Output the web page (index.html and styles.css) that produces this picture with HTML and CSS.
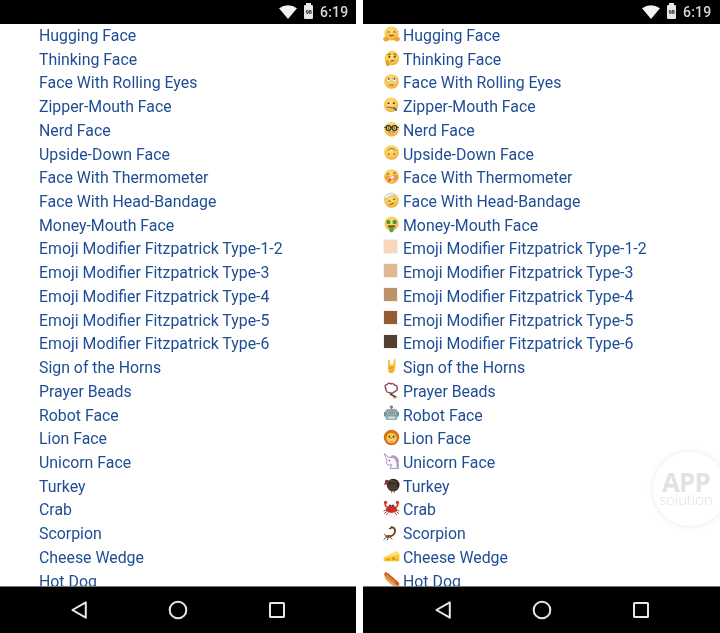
FILE: index.html
```html
<!DOCTYPE html>
<html lang="en">
<head>
<meta charset="utf-8">
<title>Emoji list comparison</title>
<link rel="stylesheet" href="styles.css">
</head>
<body>
<svg class="defs" aria-hidden="true">
  <defs>
    <radialGradient id="fc" cx=".45" cy=".35" r=".7"><stop offset="0" stop-color="#fde27e"/><stop offset=".7" stop-color="#f8c44c"/><stop offset="1" stop-color="#e99a28"/></radialGradient>
    <symbol id="e-hug" viewBox="0 0 16 16"><circle cx="8" cy="7" r="6.6" fill="url(#fc)"/><path d="M4.2 6q1.2-1.4 2.4 0M9.4 6q1.2-1.4 2.4 0" fill="none" stroke="#7a4a1c" stroke-width=".9"/><path d="M4.8 8.3q3.2 3.4 6.4 0z" fill="#b5541f"/><ellipse cx="2.9" cy="12.3" rx="2.7" ry="2.2" fill="#f2a22e"/><ellipse cx="13.1" cy="12.3" rx="2.7" ry="2.2" fill="#f2a22e"/></symbol>
    <symbol id="e-think" viewBox="0 0 16 16"><circle cx="8.4" cy="7.6" r="6.8" fill="url(#fc)"/><path d="M4.5 4.6l3-1M9.6 3.4l3 1.4" stroke="#6b3d16" stroke-width=".9"/><circle cx="6" cy="6.4" r=".9" fill="#4a2a10"/><circle cx="11" cy="6.4" r=".9" fill="#4a2a10"/><path d="M7 10.6l3.6-.8" stroke="#8a4a1a" stroke-width="1"/><path d="M2.6 9.2q2.6.6 3.4 2.4l-.2 3.4h-2.4q-1.6-2.6-.8-5.8z" fill="#ee9d2c"/></symbol>
    <symbol id="e-roll" viewBox="0 0 16 16"><circle cx="8" cy="8" r="6.9" fill="url(#fc)"/><circle cx="5.3" cy="6.6" r="2.2" fill="#f7f3e6" stroke="#b98a3c" stroke-width=".4"/><circle cx="10.7" cy="6.6" r="2.2" fill="#f7f3e6" stroke="#b98a3c" stroke-width=".4"/><circle cx="5.3" cy="5.5" r=".9" fill="#5d4a30"/><circle cx="10.7" cy="5.5" r=".9" fill="#5d4a30"/><path d="M6 11.3h4" stroke="#8a5a20" stroke-width=".9"/></symbol>
    <symbol id="e-zip" viewBox="0 0 16 16"><circle cx="7.6" cy="7.4" r="6.9" fill="url(#fc)"/><circle cx="5.2" cy="5.8" r=".9" fill="#4a2a10"/><circle cx="10.2" cy="5.8" r=".9" fill="#4a2a10"/><path d="M3.8 9.6l6.6.6" stroke="#55606a" stroke-width="1.3" stroke-dasharray=".9 .4"/><path d="M10 10l3 2.8" stroke="#4d5a60" stroke-width="1.6"/></symbol>
    <symbol id="e-nerd" viewBox="0 0 16 16"><circle cx="8" cy="7.8" r="6.8" fill="url(#fc)"/><path d="M1.3 6h13.4" stroke="#2b2417" stroke-width="1"/><circle cx="5.2" cy="6.6" r="2.3" fill="#f8e3a0" stroke="#2b2417" stroke-width="1.1"/><circle cx="10.8" cy="6.6" r="2.3" fill="#f8e3a0" stroke="#2b2417" stroke-width="1.1"/><circle cx="5.2" cy="6.6" r=".8" fill="#2b2417"/><circle cx="10.8" cy="6.6" r=".8" fill="#2b2417"/><path d="M5 10.3q3 2.8 6 0z" fill="#fff" stroke="#7a4a1c" stroke-width=".5"/></symbol>
    <symbol id="e-up" viewBox="0 0 16 16"><circle cx="8" cy="8" r="6.9" fill="url(#fc)"/><path d="M4.4 6.2q3.6-4 7.2 0" fill="none" stroke="#8a5a20" stroke-width=".9"/><path d="M5.4 8.6v1.6M10.6 8.6v1.6" stroke="#6a4418" stroke-width="1.1"/></symbol>
    <symbol id="e-thermo" viewBox="0 0 16 16"><circle cx="8" cy="8" r="6.9" fill="url(#fc)"/><ellipse cx="11" cy="9" rx="3" ry="2.6" fill="#ee7a42" opacity=".7"/><ellipse cx="4.2" cy="9" rx="2.4" ry="2.2" fill="#ee7a42" opacity=".6"/><path d="M3.6 5.8q1.2-1 2.4 0M9.6 5q1.2-1 2.4 0" fill="none" stroke="#6a3a14" stroke-width=".9"/><path d="M5.2 12.4l4.8-4.6" stroke="#f2f2f2" stroke-width="2"/><path d="M5 12.6l2.6-2.4" stroke="#d8302c" stroke-width="1.6"/></symbol>
    <symbol id="e-band" viewBox="0 0 16 16"><circle cx="8" cy="8" r="6.9" fill="url(#fc)"/><path d="M1.1 7.4q-.2-3 2.2-4.8q3-2.2 7-1.2l1.4 1.6q-6 .2-10.6 4.4z" fill="#f2f2ee" stroke="#a9a9a0" stroke-width=".5"/><path d="M5 8.8q1-.8 2 0M9.4 7q1-.8 2 0" fill="none" stroke="#5e3a14" stroke-width=".9"/><path d="M6 12l4.4-1.6" stroke="#8a4a1a" stroke-width=".9"/></symbol>
    <symbol id="e-money" viewBox="0 0 16 16"><circle cx="8" cy="7" r="6.6" fill="url(#fc)"/><rect x="3.4" y="4" width="3.4" height="3.4" fill="#3d9636"/><rect x="9.2" y="4" width="3.4" height="3.4" fill="#3d9636"/><path d="M4.4 9h7.2q-.4 1.3-1.4 1.7H5.8q-1-.4-1.4-1.7z" fill="#5a3210"/><path d="M6 10.2h4v3.3a2 2 0 0 1-4 0z" fill="#4aad3c"/></symbol>
    <symbol id="e-horns" viewBox="0 0 16 16"><path d="M4.6 1.6l1.5-.2.9 5h2.4l1-5.2 1.5.3-.3 7.5q0 3.6-2.6 5.4h-2.3q-2.4-1.4-2-5z" fill="#f6c23e"/><path d="M5.5 8.3h4.6v1.6q-2.4 1.3-4.6.4z" fill="#e39a28"/><path d="M6 12.3q2 .8 3.800-.6" fill="none" stroke="#c87f20" stroke-width=".7"/></symbol>
    <symbol id="e-beads" viewBox="0 0 16 16"><path d="M2.6 6q-1.800-3 1.400-3.800q1.600-2 3.400-.4q2.600-1 3.600 1.200q2.800.2 2.200 2.800q1 2.200-1.600 2.800l-3 2.200-3.200-1q-2.400 0-2.800-3.800z" fill="none" stroke="#7b2c48" stroke-width="1.300" stroke-dasharray="1.800 .2"/><path d="M6.600 11.400l5.600 2.800" stroke="#4a3323" stroke-width="1.500"/><path d="M9.400 14.800l3.800-.2" stroke="#c9a06a" stroke-width="1.300"/></symbol>
    <symbol id="e-robot" viewBox="0 0 16 16"><circle cx="8" cy="1.800" r="1.500" fill="#c3684a"/><path d="M7.400 3h1.200v1.600H7.400z" fill="#666"/><rect x="1" y="6" width="14" height="5" rx="1.500" fill="#5c7b85"/><rect x="2.400" y="3.800" width="11.200" height="10.400" rx="2.400" fill="#7fb0bc"/><circle cx="5.400" cy="7.600" r="1.900" fill="#e8e8e0" stroke="#406070" stroke-width=".5"/><circle cx="10.600" cy="7.600" r="1.900" fill="#e8e8e0" stroke="#406070" stroke-width=".5"/><circle cx="5.400" cy="7.600" r=".9" fill="#c84a3a"/><circle cx="10.600" cy="7.600" r=".9" fill="#c84a3a"/><rect x="4.800" y="11" width="6.400" height="1.800" fill="#e8e3d0"/></symbol>
    <symbol id="e-lion" viewBox="0 0 16 16"><circle cx="8" cy="8" r="7.300" fill="#d8741c"/><circle cx="8" cy="8.400" r="4.900" fill="#f7c64c"/><circle cx="6" cy="7.200" r=".8" fill="#3b220c"/><circle cx="10" cy="7.200" r=".8" fill="#3b220c"/><path d="M6.800 9h2.400l-1.200 1.200z" fill="#7a3a10"/><ellipse cx="8" cy="11" rx="2.400" ry="1.500" fill="#fbe6b0"/><path d="M6.400 11.200q1.600 1 3.200 0" fill="none" stroke="#7a3a10" stroke-width=".6"/></symbol>
    <symbol id="e-uni" viewBox="0 0 16 16"><path d="M1.200.6l4.600 3.600q3.800-.8 6.600 1.800q2.400 2.600 2.200 8.600H6.800l1.200-3.800q-1.800.8-3.400.5L2.800 9.400l1-2.400z" fill="#f8f4fa" stroke="#8b7fa4" stroke-width=".7"/><path d="M6.600 3.200q3-2.200 6 .2q3 2.600 2.400 6q-1.400-2.400-3.200-3.200q-.6-2.200-5.200-3z" fill="#b79ac9"/><path d="M12 6.400q2 2.200 1.600 7.400" stroke="#a28bc0" stroke-width="1.200" fill="none"/><circle cx="6" cy="7" r=".6" fill="#403050"/></symbol>
    <symbol id="e-turkey" viewBox="0 0 16 16"><circle cx="9.600" cy="7.600" r="6" fill="#2f2723"/><path d="M4 5q4-3 9 .6" stroke="#6a5040" stroke-width="1" fill="none"/><ellipse cx="9" cy="9.600" rx="4.400" ry="3.600" fill="#4a3a30"/><path d="M2 5.600q-.6-2.600 1.600-3q2 .4 1.600 3.200L4.600 8z" fill="#6a3b36"/><circle cx="2.200" cy="6.400" r="1.100" fill="#c8402c"/><path d="M8 13.200v2M10.600 13.200v2" stroke="#b9782c" stroke-width=".9"/></symbol>
    <symbol id="e-crab" viewBox="0 0 16 16"><ellipse cx="8" cy="8.600" rx="5.200" ry="3.600" fill="#c72f24"/><path d="M3.600 6.600Q1 5 2.800 1.800M12.400 6.600Q15 5 13.200 1.800" fill="none" stroke="#d23a2c" stroke-width="1.500"/><circle cx="2.400" cy="2.400" r="1.600" fill="#d23a2c"/><circle cx="13.600" cy="2.400" r="1.600" fill="#d23a2c"/><path d="M3.600 9.400L.6 10.400M3.600 10.800L1 12.800M5 11.600l-2 2.600M12.400 9.400l3 1M12.400 10.800l2.600 2M11 11.600l2 2.600" stroke="#a8271f" stroke-width=".8"/><circle cx="6.600" cy="5" r=".8" fill="#321"/><circle cx="9.400" cy="5" r=".8" fill="#321"/></symbol>
    <symbol id="e-scorp" viewBox="0 0 16 16"><path d="M5.400 11.600q4.400-.2 5.600-3.400q1-3-1-4.600Q8.400 2.600 7.200 3.400" fill="none" stroke="#6a4722" stroke-width="1.800"/><path d="M7.800 3.500L6 4.700" stroke="#2b1c0e" stroke-width="1.200"/><ellipse cx="5" cy="11.700" rx="2.800" ry="1.400" fill="#7a5226"/><path d="M3 12.600L.6 14.800M5 13l-1.200 2.500M7 12.500l1.600 2M2.600 11L.8 9.400" stroke="#43301a" stroke-width=".8"/></symbol>
    <symbol id="e-cheese" viewBox="0 0 16 16"><path d="M.6 9.200L12 3.400q3 .2 3.400 3.200v5.800H.6z" fill="#f6c52f"/><path d="M.6 9.200L12 3.400q3 .2 3.400 3.200z" fill="#fde070"/><circle cx="5" cy="10.800" r="1" fill="#c98d12"/><circle cx="10" cy="10" r="1.300" fill="#c98d12"/><circle cx="13.200" cy="11" r=".7" fill="#c98d12"/></symbol>
    <symbol id="e-dog" viewBox="0 0 16 16"><path d="M1 3.400Q2.400.6 5 2l10 8.600q1.600 3-1.800 4.600Q8 14 3.600 9.200 1 6.600 1 3.400z" fill="#e3a457"/><path d="M1.400 1.700Q3 .6 4.600 2l10.200 9.400q.8 1.800-.8 2.200Q8 10.400 2 4q-1.200-1.200-.6-2.300z" fill="#c8502e"/><path d="M3 2.800l1.300 1 .3 1.500 1.400.2.400 1.500 1.500.2.400 1.400 1.500.3.400 1.400 1.500.3" fill="none" stroke="#f6d040" stroke-width=".7"/></symbol>
    <symbol id="i-wifi" viewBox="0 0 18 14"><path d="M0 3.200Q9-2.800 18 3.200L9 14z" fill="#f2f2f2"/></symbol>
    <symbol id="i-back" viewBox="0 0 18 20"><path d="M15.800 2.300v15.400L2.400 10z" fill="none" stroke="#e8e8e8" stroke-width="2" stroke-linejoin="round"/></symbol>
    <symbol id="i-home" viewBox="0 0 20 20"><circle cx="10" cy="10" r="8.300" fill="none" stroke="#e8e8e8" stroke-width="2"/></symbol>
    <symbol id="i-recent" viewBox="0 0 18 18"><rect x="2" y="2" width="14" height="14" rx=".6" fill="none" stroke="#e8e8e8" stroke-width="2"/></symbol>
  </defs>
</svg>

<main class="stage">
  <section class="phone">
    <header class="status">
      <svg class="wifi"><use href="#i-wifi"/></svg>
      <span class="battery"><span class="battery-level">98</span></span>
      <span class="clock">6:19</span>
    </header>
    <ul class="list">
      <li class="row">Hugging Face</li>
      <li class="row">Thinking Face</li>
      <li class="row">Face With Rolling Eyes</li>
      <li class="row">Zipper-Mouth Face</li>
      <li class="row">Nerd Face</li>
      <li class="row">Upside-Down Face</li>
      <li class="row">Face With Thermometer</li>
      <li class="row">Face With Head-Bandage</li>
      <li class="row">Money-Mouth Face</li>
      <li class="row">Emoji Modifier Fitzpatrick Type-1-2</li>
      <li class="row">Emoji Modifier Fitzpatrick Type-3</li>
      <li class="row">Emoji Modifier Fitzpatrick Type-4</li>
      <li class="row">Emoji Modifier Fitzpatrick Type-5</li>
      <li class="row">Emoji Modifier Fitzpatrick Type-6</li>
      <li class="row">Sign of the Horns</li>
      <li class="row">Prayer Beads</li>
      <li class="row">Robot Face</li>
      <li class="row">Lion Face</li>
      <li class="row">Unicorn Face</li>
      <li class="row">Turkey</li>
      <li class="row">Crab</li>
      <li class="row">Scorpion</li>
      <li class="row">Cheese Wedge</li>
      <li class="row">Hot Dog</li>
    </ul>
    <nav class="nav">
      <svg class="nav-back"><use href="#i-back"/></svg>
      <svg class="nav-home"><use href="#i-home"/></svg>
      <svg class="nav-recent"><use href="#i-recent"/></svg>
    </nav>
  </section>

  <section class="phone phone-emoji">
    <header class="status">
      <svg class="wifi"><use href="#i-wifi"/></svg>
      <span class="battery"><span class="battery-level">98</span></span>
      <span class="clock">6:19</span>
    </header>
    <ul class="list list-emoji">
      <li class="row"><svg class="emoji"><use href="#e-hug"/></svg>Hugging Face</li>
      <li class="row"><svg class="emoji"><use href="#e-think"/></svg>Thinking Face</li>
      <li class="row"><svg class="emoji"><use href="#e-roll"/></svg>Face With Rolling Eyes</li>
      <li class="row"><svg class="emoji"><use href="#e-zip"/></svg>Zipper-Mouth Face</li>
      <li class="row"><svg class="emoji"><use href="#e-nerd"/></svg>Nerd Face</li>
      <li class="row"><svg class="emoji"><use href="#e-up"/></svg>Upside-Down Face</li>
      <li class="row"><svg class="emoji"><use href="#e-thermo"/></svg>Face With Thermometer</li>
      <li class="row"><svg class="emoji"><use href="#e-band"/></svg>Face With Head-Bandage</li>
      <li class="row"><svg class="emoji"><use href="#e-money"/></svg>Money-Mouth Face</li>
      <li class="row"><span class="swatch tone-12"></span>Emoji Modifier Fitzpatrick Type-1-2</li>
      <li class="row"><span class="swatch tone-3"></span>Emoji Modifier Fitzpatrick Type-3</li>
      <li class="row"><span class="swatch tone-4"></span>Emoji Modifier Fitzpatrick Type-4</li>
      <li class="row"><span class="swatch tone-5"></span>Emoji Modifier Fitzpatrick Type-5</li>
      <li class="row"><span class="swatch tone-6"></span>Emoji Modifier Fitzpatrick Type-6</li>
      <li class="row"><svg class="emoji"><use href="#e-horns"/></svg>Sign of the Horns</li>
      <li class="row"><svg class="emoji"><use href="#e-beads"/></svg>Prayer Beads</li>
      <li class="row"><svg class="emoji"><use href="#e-robot"/></svg>Robot Face</li>
      <li class="row"><svg class="emoji"><use href="#e-lion"/></svg>Lion Face</li>
      <li class="row"><svg class="emoji"><use href="#e-uni"/></svg>Unicorn Face</li>
      <li class="row"><svg class="emoji"><use href="#e-turkey"/></svg>Turkey</li>
      <li class="row"><svg class="emoji"><use href="#e-crab"/></svg>Crab</li>
      <li class="row"><svg class="emoji"><use href="#e-scorp"/></svg>Scorpion</li>
      <li class="row"><svg class="emoji"><use href="#e-cheese"/></svg>Cheese Wedge</li>
      <li class="row"><svg class="emoji"><use href="#e-dog"/></svg>Hot Dog</li>
    </ul>
    <nav class="nav">
      <svg class="nav-back"><use href="#i-back"/></svg>
      <svg class="nav-home"><use href="#i-home"/></svg>
      <svg class="nav-recent"><use href="#i-recent"/></svg>
    </nav>
    <aside class="badge"><span class="badge-app">APP</span><span class="badge-sub">solution</span></aside>
  </section>
</main>
</body>
</html>
```
FILE: styles.css
```css
* { box-sizing: border-box; }
html, body { margin: 0; padding: 0; background: #fff; }
body { width: 720px; height: 633px; overflow: hidden; font-family: Roboto, "Liberation Sans", sans-serif; }
.defs { display: block; width: 0; height: 0; overflow: hidden; }
.stage { display: flex; gap: 7px; height: 633px; }
.phone { position: relative; width: 356px; height: 633px; display: flex; flex-direction: column; overflow: hidden; flex: none; filter: blur(.4px); }
.phone-emoji { width: 357px; }

.status { flex: none; height: 24px; background: #000; display: flex; align-items: center; padding-left: 279px; }
.wifi { width: 18px; height: 14px; margin-top: -1px; }
.battery { position: relative; width: 9px; height: 14px; margin-left: 7px; background: #e6e6e6; border-radius: 1px; display: flex; align-items: center; justify-content: center; }
.battery::before { content: ""; position: absolute; top: -2px; left: 2px; width: 5px; height: 2px; background: #e6e6e6; }
.battery-level { font-size: 6px; line-height: 1; font-weight: 700; color: #222; letter-spacing: -.4px; }
.clock { margin-left: 7px; font-size: 14px; font-weight: 500; color: #d8d8d8; letter-spacing: .2px; }

.list { flex: 1; min-height: 0; overflow: hidden; list-style: none; margin: 0; padding: 0 0 0 39px; }
.list-emoji { padding-left: 20px; }
.row { display: flex; align-items: center; height: 23.72px; font-size: 15.87px; line-height: 23.72px; color: #1f4d94; white-space: nowrap; }
.emoji { flex: none; width: 17px; height: 17px; margin: 0 3px 3px 0; }
.swatch { flex: none; width: 13px; height: 13px; margin: 0 6px 5px 1px; box-shadow: 0 0 0 1px rgba(200, 200, 200, .25); }
.tone-12 { background: #f8d7bc; }
.tone-3 { background: #e0b890; }
.tone-4 { background: #c09068; }
.tone-5 { background: #975b33; }
.tone-6 { background: #54402f; }

.nav { flex: none; height: 47px; background: #000; border-top: 1px solid #777; display: grid; grid-template-columns: repeat(3, 1fr); padding: 0 30px; justify-items: center; align-items: center; }
.nav-back { width: 18px; height: 20px; }
.nav-home { width: 20px; height: 20px; }
.nav-recent { width: 18px; height: 18px; }

.badge { position: absolute; left: 290px; top: 452px; width: 74px; height: 74px; padding-right: 8px; border-radius: 50%; background: #fff; box-shadow: 0 0 6px rgba(0, 0, 0, .1); display: flex; flex-direction: column; align-items: center; justify-content: center; color: #e2e2e2; }
.badge-app { font-size: 26px; font-weight: 700; font-family: "Open Sans", sans-serif; letter-spacing: -.8px; height: 20px; line-height: 20px; }
.badge-sub { font-size: 15px; height: 14px; line-height: 14px; font-family: "Open Sans", sans-serif; font-weight: 300; letter-spacing: -.1px; }
```
